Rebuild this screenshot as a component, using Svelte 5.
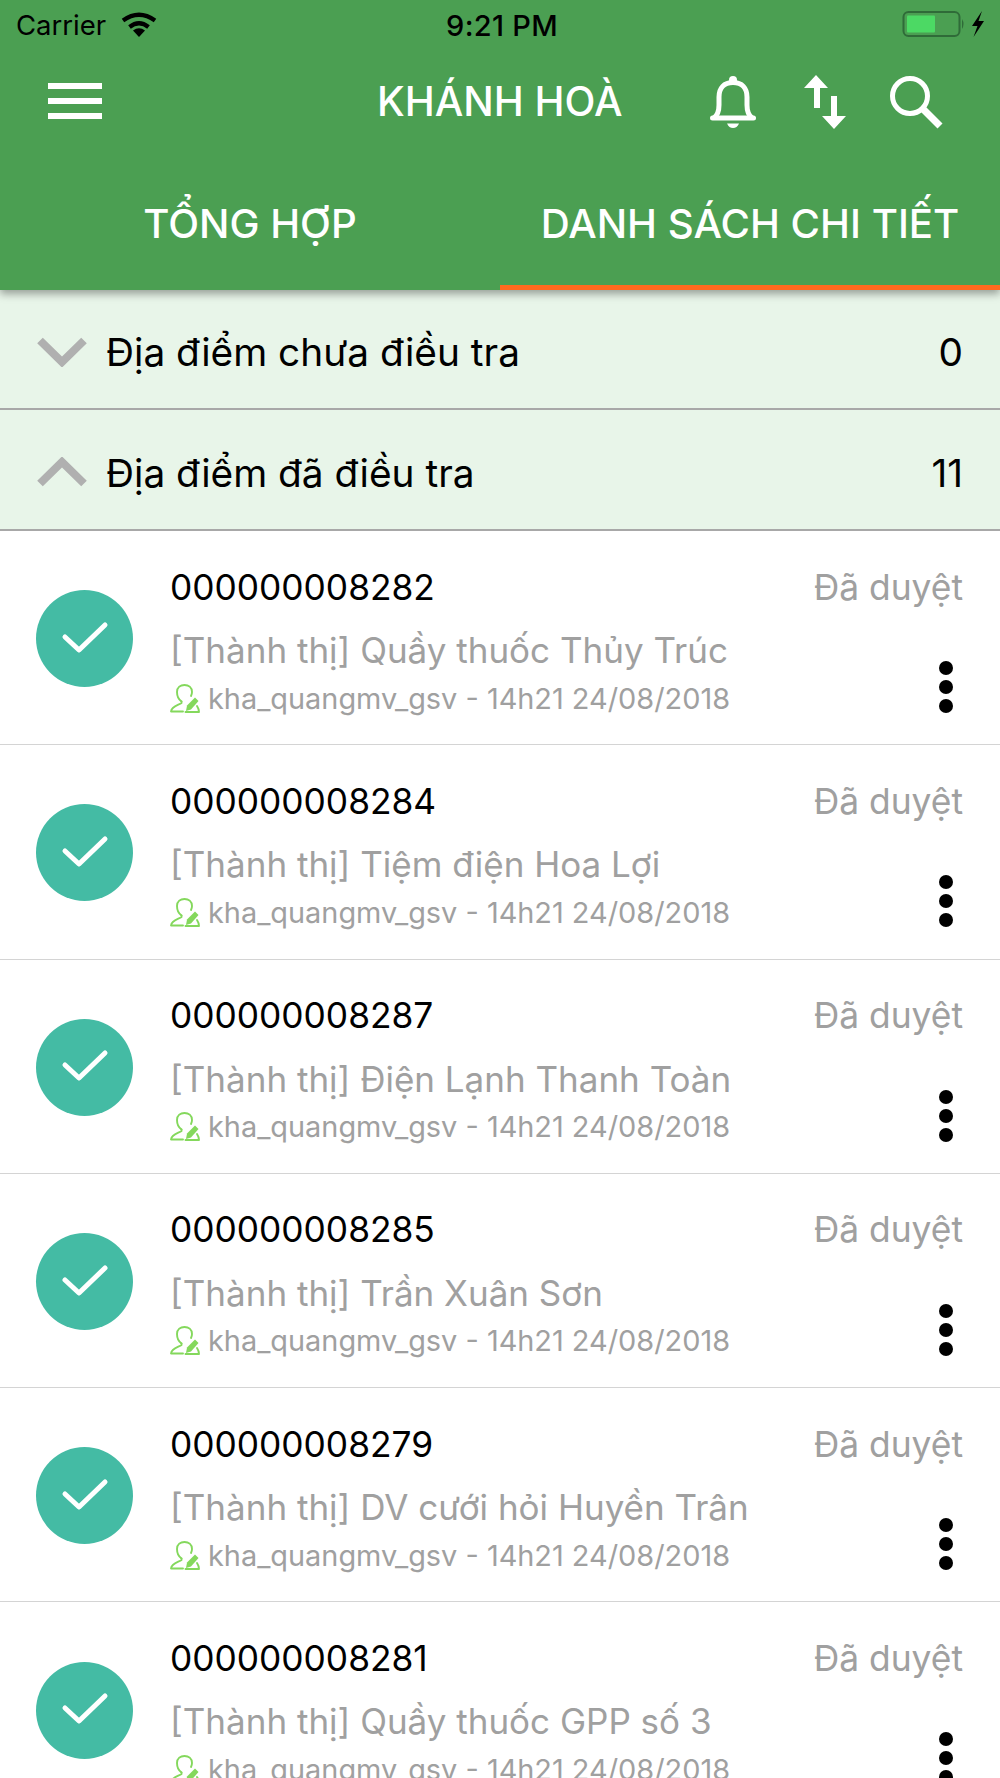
<script lang="ts">
    const rows = [
        { code: '000000008282', name: 'Quầy thuốc Thủy Trúc' },
        { code: '000000008284', name: 'Tiệm điện Hoa Lợi' },
        { code: '000000008287', name: 'Điện Lạnh Thanh Toàn' },
        { code: '000000008285', name: 'Trần Xuân Sơn' },
        { code: '000000008279', name: 'DV cưới hỏi Huyền Trân' },
        { code: '000000008281', name: 'Quầy thuốc GPP số 3' }
    ];
</script>

<div class="screen">
    <header class="top">
        <div class="status">
            <div class="status-left">
                <span class="carrier">Carrier</span>
                <svg class="wifi" viewBox="0 0 36 26" width="36" height="26">
                    <path d="M18 25 L12 18.5 Q18 14 24 18.5 Z" fill="#000"/>
                    <path d="M8.5 15 Q18 7.5 27.5 15" fill="none" stroke="#000" stroke-width="4.2"/>
                    <path d="M2 8.5 Q18 -3 34 8.5" fill="none" stroke="#000" stroke-width="4.2"/>
                </svg>
            </div>
            <span class="clock">9:21 PM</span>
            <div class="status-right">
                <svg viewBox="0 0 86 30" width="86" height="30">
                    <rect x="1.5" y="2" width="56" height="24" rx="5" fill="none" stroke="#2f6b38" stroke-width="2"/>
                    <rect x="5" y="5.5" width="28" height="17" rx="1" fill="#4cd964"/>
                    <path d="M60 9 Q63 14 60 19 Z" fill="#2f6b38"/>
                    <path d="M80 0 L70 15 L75.500 15 L71.500 26 L82 10 L76.500 10 Z" fill="#000" transform="translate(0 1)"/>
                </svg>
            </div>
        </div>
        <div class="nav">
            <div class="burger"><i></i><i></i><i></i></div>
            <div class="title">KHÁNH HOÀ</div>
            <div class="actions">
                <svg viewBox="0 0 48 54" width="48" height="54" class="bell">
                    <circle cx="24" cy="5" r="4" fill="#fff"/>
                    <path d="M5 43 Q10 39 10 30 V22 C10 13 15 7.500 24 7.500 C33 7.500 38 13 38 22 V30 Q38 39 43 43" fill="none" stroke="#fff" stroke-width="5"/>
                    <rect x="1" y="40.500" width="46" height="5" rx="2.500" fill="#fff"/>
                    <path d="M18 48.500 H30 Q28 53 24 53 Q20 53 18 48.500 Z" fill="#fff"/>
                </svg>
                <svg viewBox="0 0 42 54" width="42" height="54" class="swap">
                    <path d="M12 0 L24 13 H16 V33 H10 V13 H0 Z" fill="#fff"/>
                    <path d="M30 54 L42 41 H33 V21 H27 V41 H18 Z" fill="#fff"/>
                </svg>
                <svg viewBox="0 0 54 54" width="54" height="54" class="lens">
                    <circle cx="21" cy="21" r="17.500" fill="none" stroke="#fff" stroke-width="5"/>
                    <path d="M33.500 33.500 L51 51" stroke="#fff" stroke-width="7" fill="none"/>
                </svg>
            </div>
        </div>
        <div class="tabs">
            <div class="tab">TỔNG HỢP</div>
            <div class="tab active">DANH SÁCH CHI TIẾT</div>
        </div>
    </header>

    <div class="group">
        <svg viewBox="0 0 50 30" width="50" height="30"><path d="M3 3.500 L25 25 L47 3.500" fill="none" stroke="#b0b0b0" stroke-width="8"/></svg>
        <span class="group-label">Địa điểm chưa điều tra</span>
        <span class="group-count">0</span>
    </div>
    <div class="group">
        <svg viewBox="0 0 50 30" width="50" height="30"><path d="M3 26.500 L25 5 L47 26.500" fill="none" stroke="#b0b0b0" stroke-width="8"/></svg>
        <span class="group-label">Địa điểm đã điều tra</span>
        <span class="group-count">11</span>
    </div>

    {#each rows as row}
        <div class="row">
            <div class="badge">
                <svg viewBox="0 0 48 36" width="48" height="36">
                    <path d="M4 16 L18 29 L44 4" fill="none" stroke="#fff" stroke-width="5" stroke-linecap="round" stroke-linejoin="round"/>
                </svg>
            </div>
            <div class="info">
                <div class="line-top">
                    <span class="code">{row.code}</span>
                    <span class="state">Đã duyệt</span>
                </div>
                <div class="name">[Thành thị] {row.name}</div>
                <div class="line-bottom">
                    <div class="meta">
                        <svg viewBox="0 0 30 29" width="30" height="29">
                            <g fill="none" stroke="#84d85c" stroke-width="1.900" stroke-linecap="round" stroke-linejoin="round">
                                <path d="M11.500 17.500 C8 15 7 11 7 8 C7 3.500 10.500 1 14.500 1 C18.500 1 22 3.500 22 8 C22 9.500 21.500 11 21 12"/>
                                <path d="M11.500 17.500 V19 C9 21 1.500 22 1 27.500 H13"/>
                                <path d="M27 22 C28 23.500 29 25 29 28 H15.500"/>
                            </g>
                            <path d="M16 27 L17 21.500 L25 13.500 L28.500 17 L21 25.500 Z" fill="#84d85c"/>
                        </svg>
                        <span>kha_quangmv_gsv - 14h21 24/08/2018</span>
                    </div>
                    <div class="dots"><i></i><i></i><i></i></div>
                </div>
            </div>
        </div>
    {/each}
</div>

<style>
    :global(body) {
        margin: 0;
        background: #fff;
    }

    .screen {
        width: 1000px;
        height: 1778px;
        overflow: hidden;
        font-family: Inter, "Liberation Sans", sans-serif;
        color: #000;
    }

    .top {
        position: relative;
        background: #4b9f52;
        height: 290px;
        box-shadow: 0 4px 8px rgba(0, 0, 0, 0.35);
        display: flex;
        flex-direction: column;
    }

    .status {
        height: 50px;
        padding: 0 12px 0 16px;
        display: flex;
        align-items: center;
        justify-content: space-between;
        font-size: 27.500px;
    }

    .status-left {
        width: 300px;
        display: flex;
        align-items: center;
        gap: 15px;
    }

    .clock {
        font-size: 29px;
        font-weight: 500;
        letter-spacing: 0.3px;
    }

    .status-right {
        width: 300px;
        display: flex;
        justify-content: flex-end;
    }

    .nav {
        height: 102px;
        display: flex;
        align-items: center;
        padding-left: 48px;
    }

    .burger {
        width: 54px;
        display: flex;
        flex-direction: column;
        gap: 9px;
    }

    .burger i {
        display: block;
        height: 6px;
        background: #fff;
    }

    .title {
        margin-left: 275px;
        color: #fff;
        font-size: 40.300px;
        font-weight: 500;
        white-space: nowrap;
    }

    .actions {
        margin-left: 86px;
        display: flex;
        align-items: center;
    }

    .bell {
        margin-top: 2px;
    }

    .swap {
        margin-left: 47px;
        margin-top: 2px;
    }

    .lens {
        margin-left: 43px;
        margin-top: 2px;
    }

    .tabs {
        flex: 1;
        display: flex;
    }

    .tab {
        flex: 1;
        color: #fff;
        font-size: 40.200px;
        font-weight: 500;
        display: flex;
        align-items: center;
        justify-content: center;
        padding-top: 9px;
        border-bottom: 5px solid transparent;
        box-sizing: border-box;
        white-space: nowrap;
    }

    .tab.active {
        border-bottom-color: #ff6a1f;
    }

    .group {
        height: 120px;
        box-sizing: border-box;
        padding: 5px 37px 0;
        background: #e8f5e9;
        border-bottom: 2px solid #a8a8a8;
        display: flex;
        align-items: center;
        font-size: 38.800px;
    }

    .group + .group {
        height: 121px;
    }

    .group-label {
        margin-left: 19px;
        flex: 1;
    }

    .row {
        height: 214.300px;
        box-sizing: border-box;
        border-bottom: 1px solid #d4d4d4;
        padding-left: 36px;
        padding-right: 37px;
        display: flex;
        align-items: center;
    }

    .badge {
        width: 97px;
        height: 97px;
        flex: none;
        margin-top: 2px;
        border-radius: 50%;
        background: #44bba4;
        display: flex;
        align-items: center;
        justify-content: center;
    }

    .info {
        flex: 1;
        align-self: stretch;
        margin-left: 37px;
        padding-top: 31px;
        display: flex;
        flex-direction: column;
    }

    .line-top {
        display: flex;
        justify-content: space-between;
        align-items: center;
        height: 50px;
    }

    .code {
        font-size: 35.300px;
    }

    .state {
        font-size: 35.400px;
        color: #a0a0a0;
    }

    .name {
        margin-top: 16px;
        height: 44px;
        line-height: 44px;
        font-size: 35px;
        color: #a0a0a0;
        white-space: nowrap;
    }

    .line-bottom {
        height: 50px;
        display: flex;
        justify-content: space-between;
        align-items: flex-start;
    }

    .meta {
        display: flex;
        align-items: center;
        gap: 8px;
        margin-top: 6px;
        font-size: 28.900px;
        color: #a0a0a0;
        white-space: nowrap;
        height: 40px;
    }

    .dots {
        display: flex;
        flex-direction: column;
        gap: 5px;
        margin-top: -11px;
        margin-right: 10px;
    }

    .dots i {
        display: block;
        width: 14px;
        height: 14px;
        border-radius: 50%;
        background: #000;
    }
</style>
